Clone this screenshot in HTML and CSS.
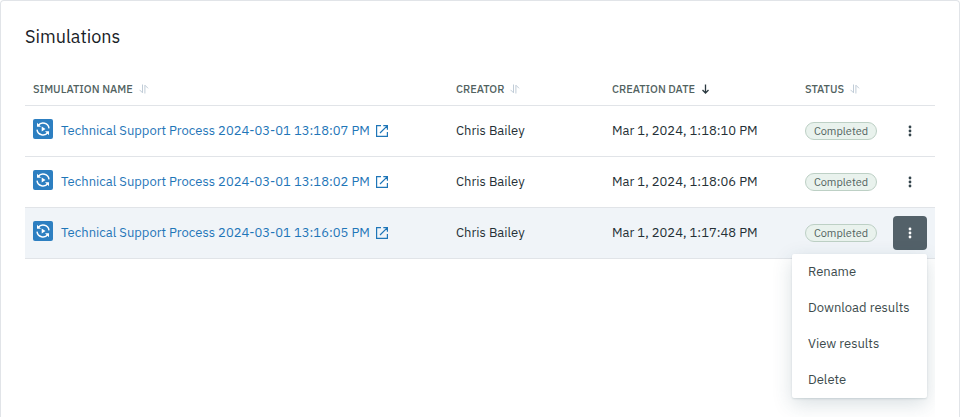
FILE: index.html
```html
<!DOCTYPE html>
<html lang="en">
<head>
<meta charset="utf-8">
<title>Simulations</title>
<link rel="stylesheet" href="styles.css">
</head>
<body>
<svg class="sprite" aria-hidden="true">
  <symbol id="sort" viewBox="0 0 10 10"><path d="M3.500 .5v8.300L.5 5.800M5.900 9.500V1.200L9 4.300"/></symbol>
  <symbol id="down" viewBox="0 0 10 10"><path d="M4.500 .5v8.500M1.500 6L4.500 9 7.500 6"/></symbol>
  <symbol id="simulation" viewBox="0 0 20 20">
    <path class="ring" d="M5.200 6.500A6 6 0 0 1 16 9.300M14.800 13.500A6 6 0 0 1 4 10.700"/>
    <path class="solid" d="M4 3.700v4h4zM16 16.300v-4h-4zM8.700 7.500v5l3.800-2.500z"/>
  </symbol>
  <symbol id="external" viewBox="0 0 12 12"><path d="M5 .6H.6v10.800h10.800V7M7.300 .6h4.100v4.100M11.200 .8L4 8"/></symbol>
  <symbol id="dots" viewBox="0 0 12 12"><circle cx="6" cy="2" r="1.400"/><circle cx="6" cy="6" r="1.400"/><circle cx="6" cy="10" r="1.400"/></symbol>
</svg>
<main class="card">
  <h1 class="title">Simulations</h1>
  <div class="table-area">
    <table class="table">
      <colgroup><col class="col-name"><col class="col-creator"><col class="col-date"><col class="col-status"><col class="col-actions"></colgroup>
      <thead>
        <tr>
          <th scope="col"><button class="sort">SIMULATION NAME<svg class="sort-icon"><use href="#sort"/></svg></button></th>
          <th scope="col"><button class="sort">CREATOR<svg class="sort-icon"><use href="#sort"/></svg></button></th>
          <th scope="col" aria-sort="descending"><button class="sort">CREATION DATE<svg class="sort-icon sort-active"><use href="#down"/></svg></button></th>
          <th scope="col"><button class="sort">STATUS<svg class="sort-icon"><use href="#sort"/></svg></button></th>
          <td></td>
        </tr>
      </thead>
      <tbody>
        <tr>
          <td><div class="name"><svg class="sim-icon"><use href="#simulation"/></svg><a class="link" href="#">Technical Support Process 2024-03-01 13:18:07 PM<svg class="external"><use href="#external"/></svg></a></div></td>
          <td>Chris Bailey</td>
          <td>Mar 1, 2024, 1:18:10 PM</td>
          <td><span class="badge">Completed</span></td>
          <td><div class="actions"><button class="more" aria-label="More actions"><svg class="dots"><use href="#dots"/></svg></button></div></td>
        </tr>
        <tr>
          <td><div class="name"><svg class="sim-icon"><use href="#simulation"/></svg><a class="link" href="#">Technical Support Process 2024-03-01 13:18:02 PM<svg class="external"><use href="#external"/></svg></a></div></td>
          <td>Chris Bailey</td>
          <td>Mar 1, 2024, 1:18:06 PM</td>
          <td><span class="badge">Completed</span></td>
          <td><div class="actions"><button class="more" aria-label="More actions"><svg class="dots"><use href="#dots"/></svg></button></div></td>
        </tr>
        <tr class="row-active">
          <td><div class="name"><svg class="sim-icon"><use href="#simulation"/></svg><a class="link" href="#">Technical Support Process 2024-03-01 13:16:05 PM<svg class="external"><use href="#external"/></svg></a></div></td>
          <td>Chris Bailey</td>
          <td>Mar 1, 2024, 1:17:48 PM</td>
          <td><span class="badge">Completed</span></td>
          <td>
            <div class="actions">
              <button class="more more-open" aria-label="More actions" aria-expanded="true"><svg class="dots"><use href="#dots"/></svg></button>
              <div class="menu" role="menu">
                <button class="menu-item" role="menuitem">Rename</button>
                <button class="menu-item" role="menuitem">Download results</button>
                <button class="menu-item" role="menuitem">View results</button>
                <button class="menu-item" role="menuitem">Delete</button>
              </div>
            </div>
          </td>
        </tr>
      </tbody>
    </table>
  </div>
</main>
</body>
</html>
```
FILE: styles.css
```css
* { box-sizing: border-box; }

body {
  margin: 0;
  background: #fff;
  color: #253036;
  font: 13px/20px "IBM Plex Sans", "Noto Sans", sans-serif;
}

button {
  margin: 0;
  padding: 0;
  border: 0;
  background: none;
  color: inherit;
  font: inherit;
  cursor: pointer;
}

svg { display: block; flex: none; }

.sprite { position: absolute; width: 0; height: 0; }

.card {
  display: flex;
  flex-direction: column;
  min-height: 100vh;
  padding: 24px 24px 0;
  border: 1px solid #e1e4e8;
  border-bottom: 0;
  border-radius: 4px 4px 0 0;
}

.title {
  margin: 0 0 24px;
  color: #182026;
  font-size: 18px;
  font-weight: 400;
  line-height: 24px;
}

.table-area { flex: 1; overflow: hidden; }

.table {
  width: 100%;
  border-spacing: 0;
  table-layout: fixed;
}

.col-name { width: 423px; }
.col-status { width: 88px; }
.col-date { width: 193px; }
.col-actions { width: 50px; }

.table th,
.table td {
  height: 51px;
  padding: 0 8px;
  border-bottom: 1px solid #e1e4e8;
  text-align: left;
  white-space: nowrap;
}

.table thead th,
.table thead td { height: 33px; }

.sort {
  display: flex;
  align-items: center;
  gap: 6px;
  color: #52625f;
  font-size: 11px;
  font-weight: 500;
}

.sort-icon {
  width: 10px;
  height: 10px;
  fill: none;
  stroke: #c0ccd7;
}

.sort-active { stroke: #2b3940; stroke-width: 1.300; }

.name { display: flex; align-items: center; gap: 8px; }

.sim-icon {
  width: 20px;
  height: 20px;
  margin-bottom: 4px;
  border-radius: 2px;
  background: #2d7fc1;
}

.ring { fill: none; stroke: #fff; stroke-width: 1.400; }
.solid { fill: #fff; }

.link {
  display: flex;
  align-items: center;
  gap: 6px;
  color: #1f76b8;
  text-decoration: none;
}

.external {
  width: 12px;
  height: 12px;
  fill: none;
  stroke: currentColor;
  stroke-width: 1.200;
}

.badge {
  display: block;
  width: 72px;
  border: 1px solid #bdd0c5;
  border-radius: 9px;
  background: #e9f2ed;
  color: #52625f;
  font-size: 11px;
  line-height: 16px;
  text-align: center;
}

.row-active td { background: #f0f4f8; }

.actions { position: relative; }

.more {
  display: flex;
  align-items: center;
  justify-content: center;
  width: 34px;
  height: 34px;
  border-radius: 4px;
  color: #34444c;
}

.more-open { background: #536169; color: #fff; }

.dots { width: 12px; height: 12px; fill: currentColor; }

.menu {
  position: absolute;
  top: 100%;
  right: 0;
  width: 135px;
  margin-top: 4px;
  border-radius: 2px;
  background: #fff;
  box-shadow: 0 1px 2px rgba(40, 75, 85, 0.15), 0 6px 20px rgba(40, 75, 95, 0.18);
}

.menu-item {
  display: block;
  width: 100%;
  padding: 8px 16px;
  color: #3d4b4d;
  text-align: left;
}
```
